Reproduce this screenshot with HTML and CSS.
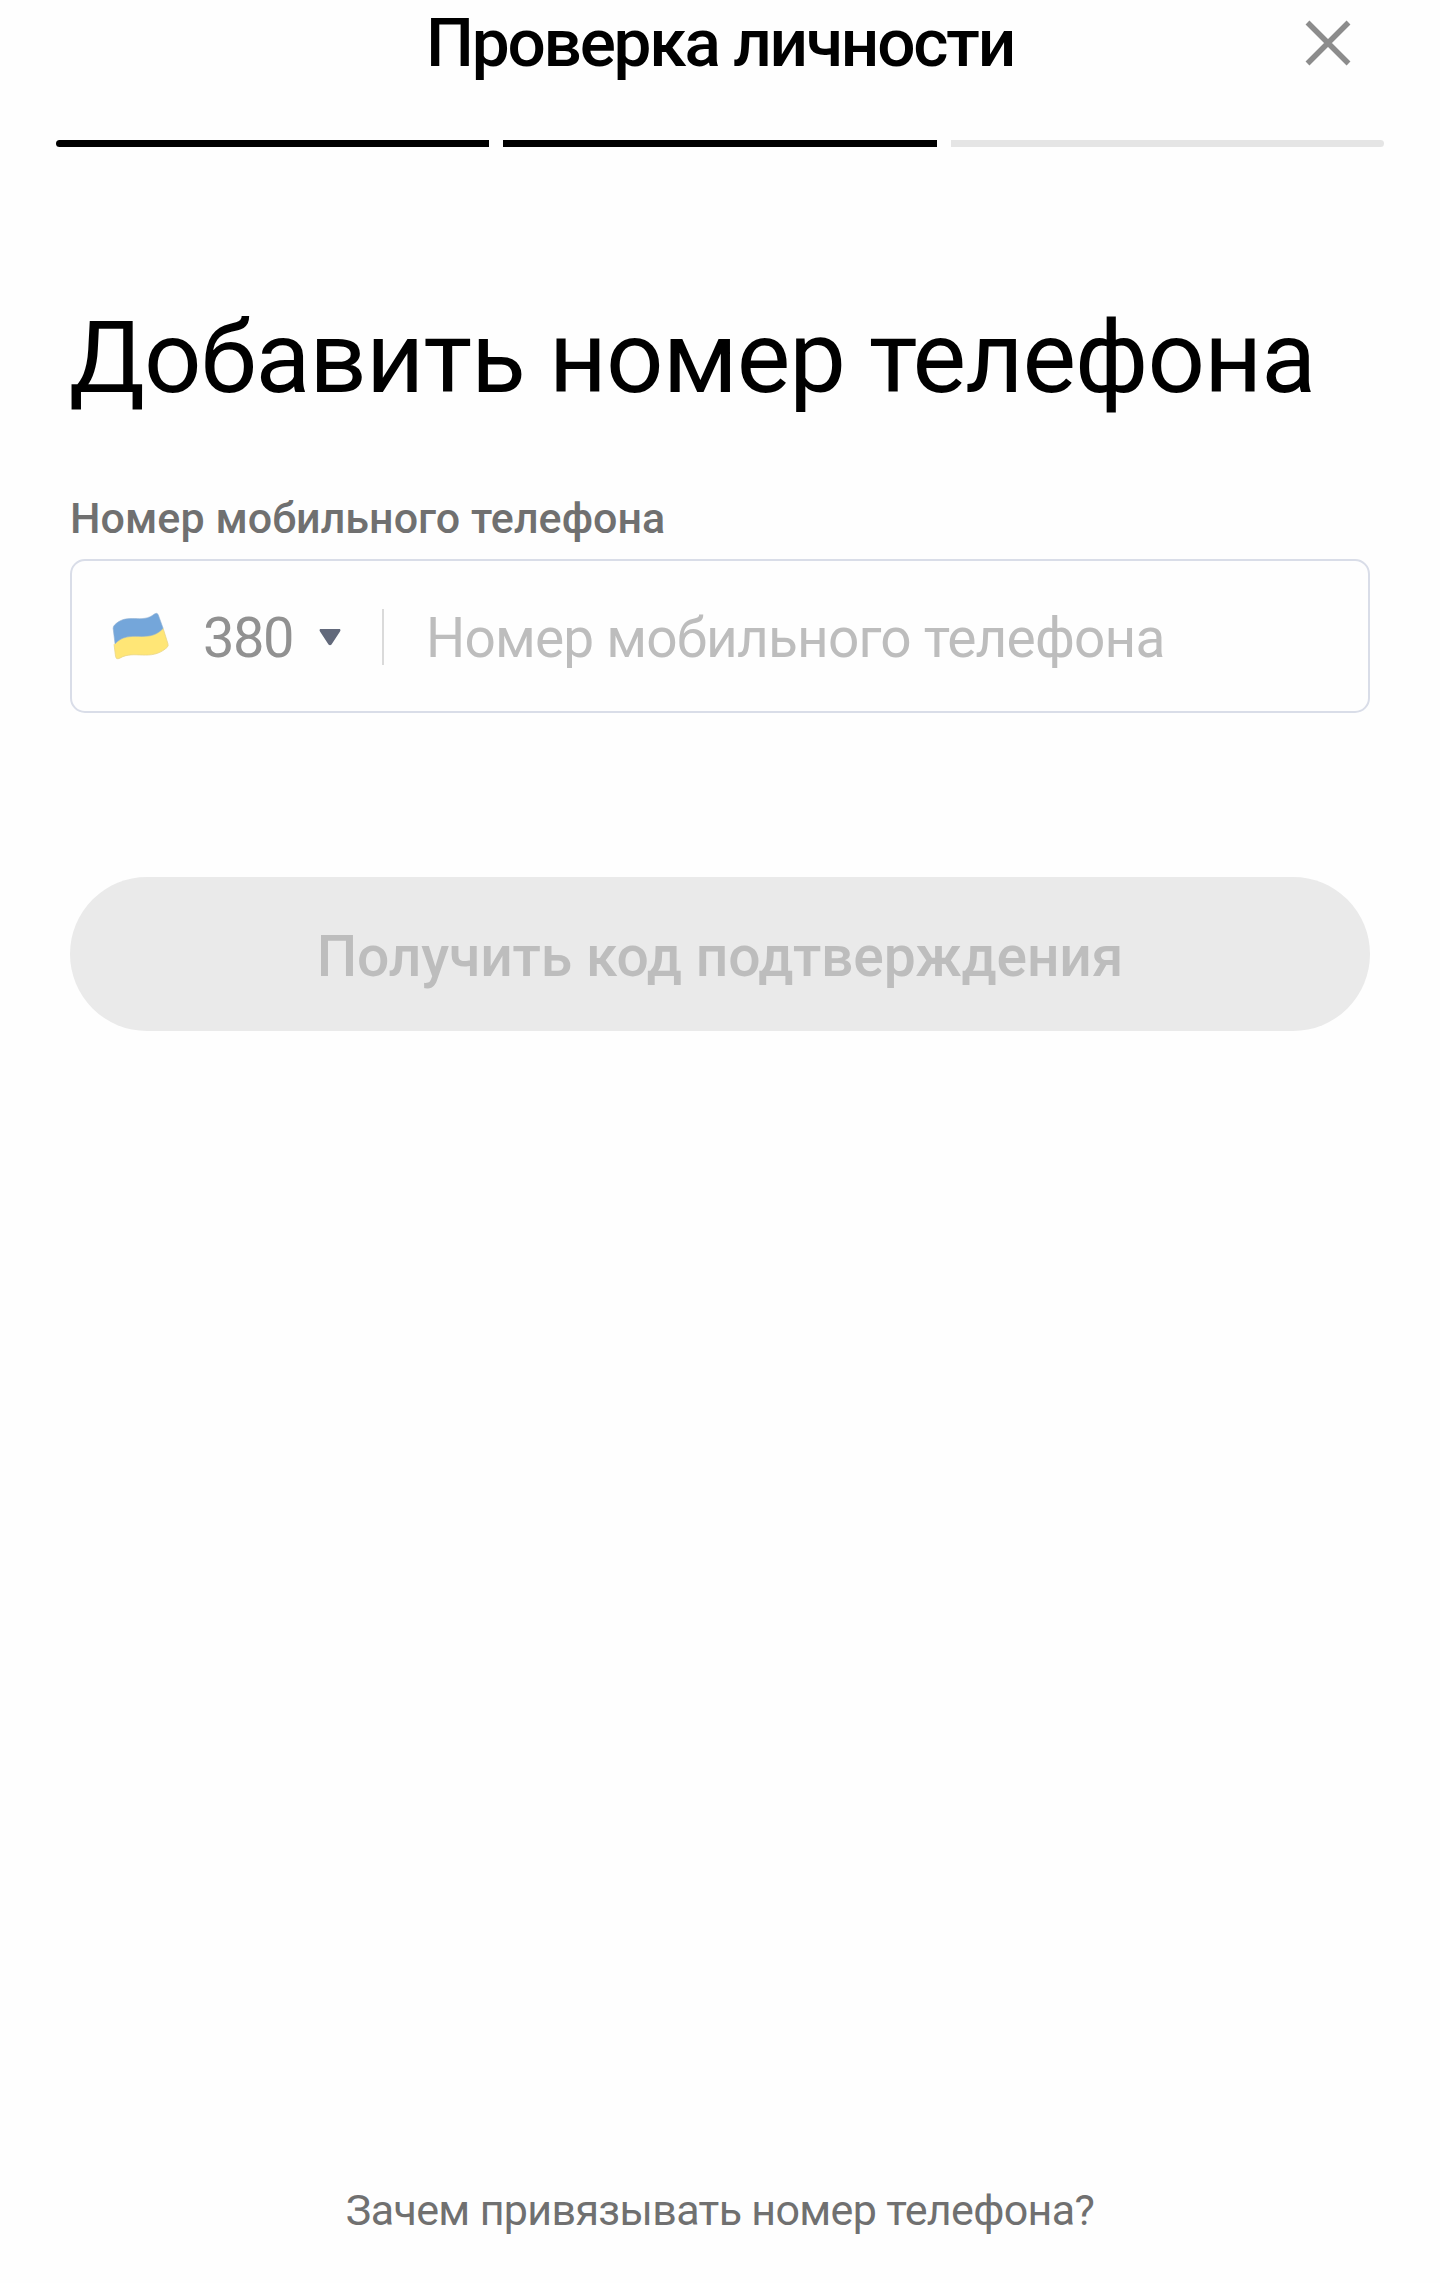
FILE: index.html
```html
<!DOCTYPE html>
<html lang="ru">
<head>
  <meta charset="utf-8">
  <title>Проверка личности</title>
  <link rel="stylesheet" href="styles.css">
</head>
<body>
  <main class="page">
    <header class="header">
      <h1 class="header-title">Проверка личности</h1>
      <button class="close" type="button">
        <svg width="46" height="46" viewBox="0 0 46 46"><path d="M2.500 2.500 43.500 43.500M43.500 2.500 2.500 43.500" fill="none" stroke="#8c8c8c" stroke-width="5.500"/></svg>
      </button>
    </header>
    <div class="progress">
      <span class="step step-done"></span>
      <span class="step step-done"></span>
      <span class="step"></span>
    </div>
    <section class="form">
      <h2 class="heading">Добавить номер телефона</h2>
      <div class="label">Номер мобильного телефона</div>
      <div class="field">
        <svg class="flag" width="58" height="50" viewBox="0 0 60 52">
          <path d="M2 34C17 16 36 32 53 17L58 33Q59 35 57 37C40 52 23 39 8 48Q4 50 3.500 46Z" fill="#ffe676" stroke="#e9d587" stroke-width=".8"/>
          <path d="M1 17Q1 15 2.500 13.500C16 0 31 13 44 2Q47 0 48 3L53 17C38 34 18 17 3 33Z" fill="#74a6da" stroke="#8fb1d3" stroke-width=".6"/>
        </svg>
        <span class="code">380</span>
        <svg class="caret" width="22" height="17" viewBox="0 0 22 17"><path d="M1 0H21Q22 1 21 2.500L12.500 15.500Q11 17 9.500 15.500L1 2.500Q0 1 1 0Z" fill="#62697b"/></svg>
        <span class="divider"></span>
        <span class="placeholder">Номер мобильного телефона</span>
      </div>
      <button class="submit" type="button">Получить код подтверждения</button>
    </section>
    <footer class="footer">Зачем привязывать номер телефона?</footer>
  </main>
</body>
</html>
```
FILE: styles.css
```css
* {
  box-sizing: border-box;
}

body {
  margin: 0;
  background: #fefefe;
  color: #000;
  font-family: Roboto, "Open Sans", sans-serif;
}

h1,
h2 {
  margin: 0;
}

button {
  border: 0;
  padding: 0;
  font-family: inherit;
}

.page {
  display: flex;
  flex-direction: column;
  height: 2283px;
}

.header {
  display: grid;
  grid-template-columns: 1fr auto 1fr;
  align-items: center;
  height: 86px;
  padding: 0 89px;
}

.header-title {
  grid-column: 2;
  font-size: 67.5px;
  font-weight: 530;
  line-height: 86px;
  letter-spacing: -2.2px;
  white-space: nowrap;
}

.close {
  justify-self: end;
  display: flex;
  background: none;
}

.progress {
  display: grid;
  grid-template-columns: repeat(3, 1fr);
  gap: 14px;
  margin: 54px 56px 0;
  border-radius: 4px;
  overflow: hidden;
}

.step {
  height: 7px;
  background: #e5e5e5;
}

.step-done {
  background: #000;
}

.form {
  padding: 151px 70px 0;
}

.heading {
  margin-left: -1px;
  font-size: 101px;
  font-weight: 400;
  line-height: 120px;
  letter-spacing: -1px;
  white-space: nowrap;
}

.label {
  margin-top: 75px;
  color: #707070;
  font-size: 43px;
  font-weight: 460;
  line-height: 50px;
  letter-spacing: 0.05px;
}

.field {
  display: flex;
  align-items: center;
  height: 154px;
  margin-top: 16px;
  padding: 2px 0 0 40px;
  border: 2px solid #d9dde8;
  border-radius: 15px;
}

.flag {
  width: 58px;
}

.code {
  width: 116px;
  margin-left: 33px;
  padding-top: 1px;
  color: #919191;
  font-size: 56px;
  line-height: 66px;
  letter-spacing: -1.5px;
}

.caret {
  width: 22px;
}

.divider {
  width: 2px;
  height: 56px;
  margin-left: 41px;
  background: #dadada;
}

.placeholder {
  margin-left: 42px;
  padding-top: 1px;
  color: #bdbdbd;
  font-size: 55px;
  line-height: 66px;
  letter-spacing: -0.8px;
}

.submit {
  display: block;
  width: 100%;
  height: 154px;
  margin-top: 164px;
  padding-top: 5px;
  border-radius: 77px;
  background: #eaeaea;
  color: #bdbdbd;
  font-size: 57px;
  font-weight: 470;
  letter-spacing: -0.15px;
}

.footer {
  margin-top: auto;
  padding-bottom: 48px;
  color: #707070;
  font-size: 43px;
  line-height: 50px;
  letter-spacing: -0.65px;
  text-align: center;
}
```
